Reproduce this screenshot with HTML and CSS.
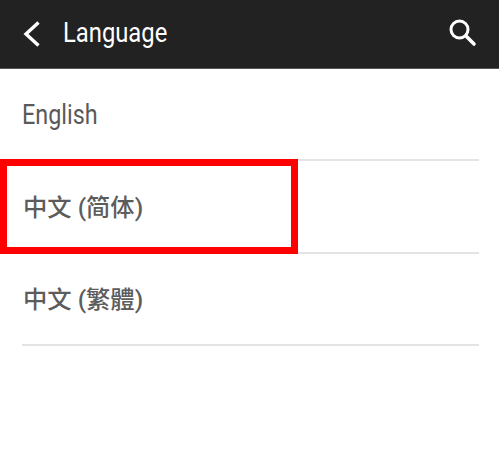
FILE: index.html
```html
<!DOCTYPE html>
<html lang="en">
<head>
<meta charset="utf-8">
<title>Language</title>
<link rel="stylesheet" href="styles.css">
</head>
<body>
<header class="bar">
  <svg class="back" width="20" height="28" viewBox="0 0 20 28"><path d="M17.500 2.500 L5 14 L17.500 25.500" fill="none" stroke="#fff" stroke-width="3.400"/></svg>
  <h1 class="title"><span class="squeeze">Language</span></h1>
  <svg class="search" width="30" height="30" viewBox="0 0 30 30"><circle cx="12.500" cy="12.500" r="8.500" fill="none" stroke="#fff" stroke-width="3"/><path d="M19 19 L27 27" stroke="#fff" stroke-width="3.600" stroke-linecap="round"/></svg>
</header>
<ul class="list">
  <li class="row"><span class="squeeze">English</span></li>
  <li class="row row-cjk"><span>中文 (简体)</span><span class="mark"></span></li>
  <li class="row row-cjk" lang="zh-TW"><span>中文 (繁體)</span></li>
</ul>
</body>
</html>
```
FILE: styles.css
```css
* { box-sizing: border-box; }
html, body { margin: 0; padding: 0; }
body { width: 499px; height: 475px; background: #fff; overflow: hidden; font-family: Roboto, "Noto Sans CJK SC", sans-serif; }
.bar { height: 69px; background: #222; border-bottom: 1px solid #555; display: flex; align-items: center; padding: 0 22px 1px 21px; }
.back { flex: none; }
.title { flex: 1; margin: 0 0 2px 22px; font-size: 27.500px; font-weight: 400; color: #fff; }
.squeeze { display: inline-block; transform: scaleX(0.865); transform-origin: 0 50%; }
.search { flex: none; margin-top: -4px; }
.list { list-style: none; margin: 0; padding: 0 20px 0 22px; }
.row { position: relative; height: 92.300px; border-bottom: 2px solid #e4e4e4; display: flex; align-items: center; font-size: 27px; color: #595959; padding-top: 1px; }
.row-cjk { font-size: 24.300px; font-weight: 500; padding-left: 1px; padding-top: 0; padding-bottom: 2px; color: #5c5c5c; }
.row-cjk[lang="zh-TW"] { font-family: Roboto, "Noto Sans CJK TC", sans-serif; }
.mark { position: absolute; left: -22px; top: -2px; width: 298px; height: 95px; border: 7px solid #f00; }
```
